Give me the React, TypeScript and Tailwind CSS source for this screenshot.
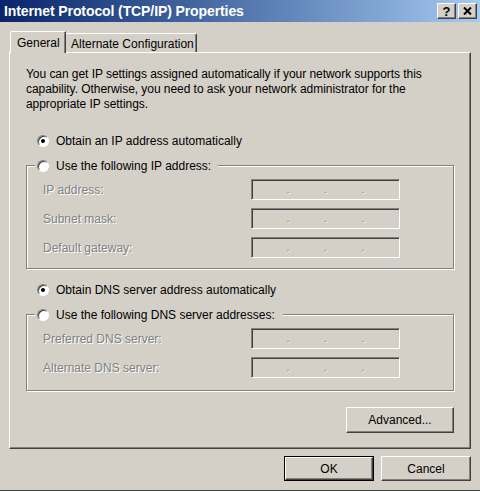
import React from 'react';

const font = "font-['Liberation_Sans',Arial,sans-serif]";

const Radio: React.FC<{ checked?: boolean }> = ({ checked }) => (
  <span className="w-[12px] h-[12px] shrink-0 rounded-full border border-t-[#808080] border-l-[#808080] border-b-white border-r-white bg-white shadow-[inset_1px_1px_0_#404040] flex items-center justify-center">
    {checked && <span className="w-[4px] h-[4px] rounded-full bg-black" />}
  </span>
);

const IpBox: React.FC = () => (
  <div className="w-[149px] h-[21px] border border-t-[#808080] border-l-[#808080] border-b-white border-r-white shadow-[inset_1px_1px_0_#404040] flex items-center justify-evenly text-[11px] leading-none text-[#808080] [text-shadow:1px_1px_0_#fff]">
    <span>.</span>
    <span>.</span>
    <span>.</span>
  </div>
);

const FieldRow: React.FC<{ label: string }> = ({ label }) => (
  <div className="flex items-center h-[21px]">
    <span className="w-[224px] pl-[16px] text-[12px] text-[#808080] [text-shadow:1px_1px_0_#fff]">{label}</span>
    <IpBox />
  </div>
);

const GroupBox: React.FC<{ legend: string; legendWidth: string; height: string; children: React.ReactNode }> = ({
  legend,
  legendWidth,
  height,
  children,
}) => (
  <div className={`relative ml-[16px] w-[428px] ${height} border border-[#808080] shadow-[inset_1px_1px_0_#fff,1px_1px_0_#fff]`}>
    <div className={`absolute left-[8px] -top-[9px] ${legendWidth} h-[17px] bg-[#d4d0c8] flex items-center gap-[7px] pl-[2px] text-[12px] text-black`}>
      <Radio />
      <span>{legend}</span>
    </div>
    <div className="pt-[13px] flex flex-col gap-[8px]">{children}</div>
  </div>
);

const Button: React.FC<{ label: string; w: string; isDefault?: boolean }> = ({ label, w, isDefault }) => (
  <div className={`${w} h-[25px] ${isDefault ? 'border border-black' : ''}`}>
    <div className="w-full h-full border border-t-white border-l-white border-b-[#404040] border-r-[#404040] shadow-[inset_-1px_-1px_0_#808080] flex items-center justify-center text-[12px] text-black">
      {label}
    </div>
  </div>
);

const CaptionButton: React.FC<{ children: React.ReactNode }> = ({ children }) => (
  <div className="w-[19px] h-[16px] bg-[#d4d0c8] border border-t-white border-l-white border-b-[#404040] border-r-[#404040] shadow-[inset_-1px_-1px_0_#808080] flex items-center justify-center">
    {children}
  </div>
);

export default function App() {
  return (
    <div className={`w-[480px] h-[491px] bg-[#d4d0c8] flex flex-col ${font} border-b border-[#404040]`}>
      {/* title bar */}
      <div className="h-[22px] shrink-0 bg-linear-to-r from-[#0a246a] to-[#a6caf0] flex items-center pl-[4px] pr-[3px]">
        <span className="text-white font-bold text-[14px] tracking-[-0.1px]">Internet Protocol (TCP/IP) Properties</span>
        <div className="ml-auto flex gap-[2px]">
          <CaptionButton>
            <span className="text-[13px] font-bold leading-none text-black">?</span>
          </CaptionButton>
          <CaptionButton>
            <svg width="9" height="8" viewBox="0 0 9 8">
              <path d="M1 0.5 L8 7.5 M8 0.5 L1 7.5" stroke="black" strokeWidth="2" />
            </svg>
          </CaptionButton>
        </div>
      </div>

      <div className="px-[9px] pt-[9px]">
        {/* tabs */}
        <div className="flex items-end h-[22px] -mb-px pl-[1px] relative z-10">
          <div className="w-[56px] h-[22px] bg-[#d4d0c8] border-t border-l border-white rounded-tl-[2px] border-r border-r-[#404040] shadow-[inset_-1px_0_0_#808080] pl-[6px] pt-[2px] text-[12px] text-black">
            General
          </div>
          <div className="w-[131px] h-[19px] mb-px border-t border-white border-r border-r-[#404040] rounded-tr-[2px] shadow-[inset_-1px_0_0_#808080] pl-[5px] pt-[1px] text-[12px] text-black">
            Alternate Configuration
          </div>
        </div>

        {/* panel */}
        <div className="h-[397px] border border-t-white border-l-white border-b-[#404040] border-r-[#404040] shadow-[inset_-1px_-1px_0_#808080] flex flex-col">
          <p className="mt-[14px] ml-[16px] text-[12px] leading-[15px] text-black w-[420px] tracking-[-0.05px]">
            You can get IP settings assigned automatically if your network supports this capability. Otherwise, you need to ask your network administrator for the appropriate IP settings.
          </p>

          <div className="mt-[21px] ml-[27px] h-[16px] flex items-center gap-[7px] text-[12px] text-black">
            <Radio checked />
            <span>Obtain an IP address automatically</span>
          </div>

          <div className="mt-[16px]">
            <GroupBox legend="Use the following IP address:" legendWidth="w-[183px]" height="h-[104px]">
              <FieldRow label="IP address:" />
              <FieldRow label="Subnet mask:" />
              <FieldRow label="Default gateway:" />
            </GroupBox>
          </div>

          <div className="mt-[13px] ml-[27px] h-[16px] flex items-center gap-[7px] text-[12px] text-black">
            <Radio checked />
            <span>Obtain DNS server address automatically</span>
          </div>

          <div className="mt-[16px]">
            <GroupBox legend="Use the following DNS server addresses:" legendWidth="w-[248px]" height="h-[77px]">
              <FieldRow label="Preferred DNS server:" />
              <FieldRow label="Alternate DNS server:" />
            </GroupBox>
          </div>

          <div className="mt-[16px] ml-[16px] w-[428px] flex justify-end">
            <Button label="Advanced..." w="w-[108px] h-[26px]" />
          </div>
        </div>

        {/* dialog buttons */}
        <div className="mt-[7px] flex justify-end gap-[7px]">
          <Button label="OK" w="w-[90px]" isDefault />
          <Button label="Cancel" w="w-[90px]" />
        </div>
      </div>
    </div>
  );
}
